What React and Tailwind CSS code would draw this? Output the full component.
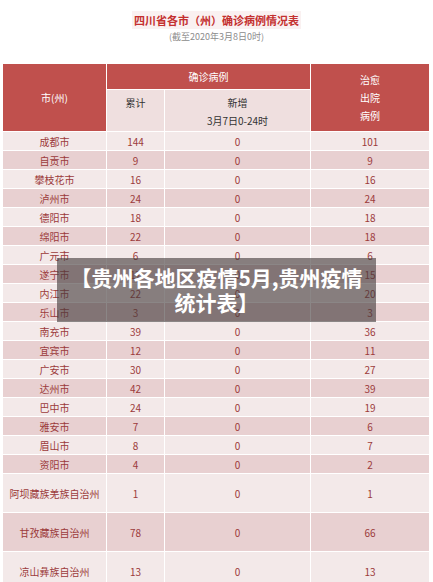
import React from 'react';

const rows = [
  ['成都市', '144', '0', '101'],
  ['自贡市', '9', '0', '9'],
  ['攀枝花市', '16', '0', '16'],
  ['泸州市', '24', '0', '24'],
  ['德阳市', '18', '0', '18'],
  ['绵阳市', '22', '0', '18'],
  ['广元市', '6', '0', '6'],
  ['遂宁市', '17', '0', '15'],
  ['内江市', '22', '0', '20'],
  ['乐山市', '3', '0', '3'],
  ['南充市', '39', '0', '36'],
  ['宜宾市', '12', '0', '11'],
  ['广安市', '30', '0', '27'],
  ['达州市', '42', '0', '39'],
  ['巴中市', '24', '0', '19'],
  ['雅安市', '7', '0', '6'],
  ['眉山市', '8', '0', '7'],
  ['资阳市', '4', '0', '2'],
];

const bigRows = [
  ['阿坝藏族羌族自治州', '1', '0', '1'],
  ['甘孜藏族自治州', '78', '0', '66'],
  ['凉山彝族自治州', '13', '0', '13'],
];

const font = { fontFamily: '"Noto Sans CJK SC", "Noto Sans", sans-serif' };

const App = () => {
  const renderRow = (r, i, tall) => {
    const bg = i % 2 === 0 ? 'bg-[#f3e9e9]' : 'bg-[#e8d0d1]';
    const h = tall ? 'h-[38px]' : 'h-[18px]';
    return r.map((v, j) => (
      <div
        key={`${r[0]}-${j}`}
        className={`${bg} ${h} flex items-center justify-center text-[10px] text-[#9c3b3b] whitespace-nowrap`}
      >
        {v}
      </div>
    ));
  };

  return (
    <div className="relative w-[433px] h-[582px] overflow-hidden bg-white" style={font}>
      <div className="pt-[11px] flex flex-col items-center">
        <div className="text-[11px] font-bold text-[#c4302f] bg-[#faf1f1] px-[2px] leading-[18px]">
          四川省各市（州）确诊病例情况表
        </div>
        <div className="text-[9px] text-[#8c8c8c] leading-[14px] mt-[1px]">(截至2020年3月8日0时)</div>
      </div>

      <div className="ml-[3px] mt-[20px] w-[426px] grid grid-cols-[103px_57px_145px_118px] gap-px bg-white">
        <div className="row-span-2 bg-[#c0504d] flex items-center justify-center text-[10px] text-white">市(州)</div>
        <div className="col-span-2 h-[25px] bg-[#c0504d] flex items-center justify-center text-[10px] text-white">确诊病例</div>
        <div className="row-span-2 bg-[#c0504d] flex flex-col items-center justify-center text-[10px] leading-[18px] text-white">
          <span>治愈</span>
          <span>出院</span>
          <span>病例</span>
        </div>
        <div className="h-[41px] bg-[#efdfdf] flex justify-center pt-[4px] text-[10px] leading-[18px] text-[#333]">累计</div>
        <div className="h-[41px] bg-[#efdfdf] flex flex-col items-center pt-[4px] text-[10px] leading-[18px] text-[#333]">
          <span>新增</span>
          <span>3月7日0-24时</span>
        </div>
        {rows.map((r, i) => renderRow(r, i, false))}
        {bigRows.map((r, i) => renderRow(r, i, true))}
      </div>

      <div className="absolute left-[57px] top-[258px] w-[319px] h-[64px] bg-[rgba(68,60,60,0.62)] flex flex-col items-center justify-center text-white font-bold text-[21px] leading-[25px]">
        <span>【贵州各地区疫情5月,贵州疫情</span>
        <span>统计表】</span>
      </div>
    </div>
  );
};

export default App;
